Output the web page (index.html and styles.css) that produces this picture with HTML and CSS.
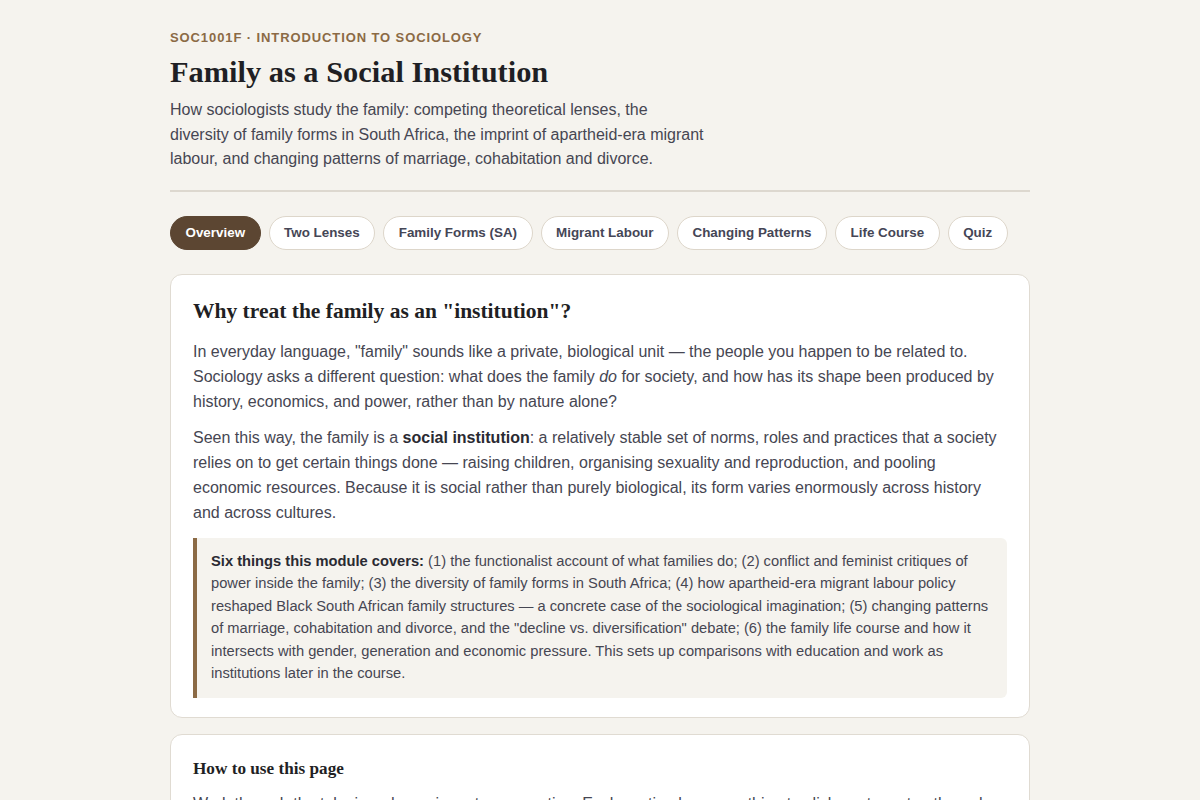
FILE: index.html
```html
<!DOCTYPE html>
<html lang="en">
  <head>
    <meta charset="UTF-8" />
    <meta name="viewport" content="width=device-width, initial-scale=1.0" />
    <title>Family as a Social Institution</title>
    <link rel="stylesheet" href="styles.css">
  </head>
  <body>
    <main class="page">
      <header class="page-header">
        <div class="eyebrow">SOC1001F · Introduction to Sociology</div>
        <h1>Family as a Social Institution</h1>
        <p class="lede">
          How sociologists study the family: competing theoretical lenses, the
          diversity of family forms in South Africa, the imprint of apartheid-era
          migrant labour, and changing patterns of marriage, cohabitation and divorce.
        </p>
      </header>

      <nav class="tabs">
        <button class="tab active">Overview</button>
        <button class="tab">Two Lenses</button>
        <button class="tab">Family Forms (SA)</button>
        <button class="tab">Migrant Labour</button>
        <button class="tab">Changing Patterns</button>
        <button class="tab">Life Course</button>
        <button class="tab">Quiz</button>
      </nav>

      <section class="card">
        <h2>Why treat the family as an "institution"?</h2>
        <p>
          In everyday language, "family" sounds like a private, biological unit — the
          people you happen to be related to. Sociology asks a different question:
          what does the family <em>do</em> for society, and how has its shape been
          produced by history, economics, and power, rather than by nature alone?
        </p>
        <p>
          Seen this way, the family is a <strong>social institution</strong>: a
          relatively stable set of norms, roles and practices that a society relies
          on to get certain things done — raising children, organising sexuality and
          reproduction, and pooling economic resources. Because it is social rather
          than purely biological, its form varies enormously across history and
          across cultures.
        </p>
        <div class="callout">
          <strong>Six things this module covers:</strong> (1) the functionalist
          account of what families do; (2) conflict and feminist critiques of power
          inside the family; (3) the diversity of family forms in South Africa; (4)
          how apartheid-era migrant labour policy reshaped Black South African family
          structures — a concrete case of the sociological imagination; (5) changing
          patterns of marriage, cohabitation and divorce, and the "decline vs.
          diversification" debate; (6) the family life course and how it intersects
          with gender, generation and economic pressure. This sets up comparisons
          with education and work as institutions later in the course.
        </div>
      </section>

      <section class="card">
        <h3>How to use this page</h3>
        <p>
          Work through the tabs in order, or jump to any section. Each section has
          something to click, sort, or step through.
        </p>
      </section>
    </main>
  </body>
</html>
```

FILE: styles.css
```css
body {
  margin: 0;
  padding: 0;
  background: #f5f3ee;
  color: #464652;
  font-family: "Liberation Sans", Arial, sans-serif;
}
.page {
  width: 860px;
  margin: 0 auto;
  padding: 30px 0 40px;
}
.page-header {
  border-bottom: 2px solid #ddd8cf;
  padding-bottom: 18px;
}
.eyebrow {
  font-size: 13px;
  font-weight: bold;
  text-transform: uppercase;
  letter-spacing: 0.9px;
  color: #8b6a45;
}
h1 {
  font-family: "Liberation Serif", "Times New Roman", serif;
  font-size: 30.4px;
  color: #1f1f24;
  margin: 10px 0 8px;
}
.lede {
  font-size: 16px;
  line-height: 24.5px;
  max-width: 540px;
  margin: 0;
}
.tabs {
  display: flex;
  flex-wrap: wrap;
  gap: 8px;
  margin: 24px 0 24px;
}
.tab {
  font-family: "Liberation Sans", Arial, sans-serif;
  font-size: 13.4px;
  font-weight: bold;
  color: #454656;
  background: #fff;
  border: 1px solid #ddd6ca;
  border-radius: 18px;
  height: 34px;
  padding: 0 14.5px;
}
.tab.active {
  background: #5c4632;
  border-color: #5c4632;
  color: #fff;
}
.card {
  background: #fff;
  border: 1px solid #e0dbd2;
  border-radius: 12px;
  padding: 22px 22px 19px;
  margin-bottom: 16px;
}
h2 {
  font-family: "Liberation Serif", "Times New Roman", serif;
  font-size: 21.5px;
  color: #1f1f24;
  margin: 2px 0 15px;
}
h3 {
  font-family: "Liberation Serif", "Times New Roman", serif;
  font-size: 17.2px;
  color: #1f1f24;
  margin: 2px 0 12px;
}
.card p {
  font-size: 16px;
  line-height: 25px;
  margin: 0 0 11px;
}
.card strong {
  color: #2a2a32;
}
.callout {
  background: #f5f3ee;
  border-left: 4px solid #8b6a45;
  border-radius: 0 6px 6px 0;
  padding: 12px 14px 13px;
  margin-top: 13px;
  font-size: 14.7px;
  line-height: 22.6px;
}
```
